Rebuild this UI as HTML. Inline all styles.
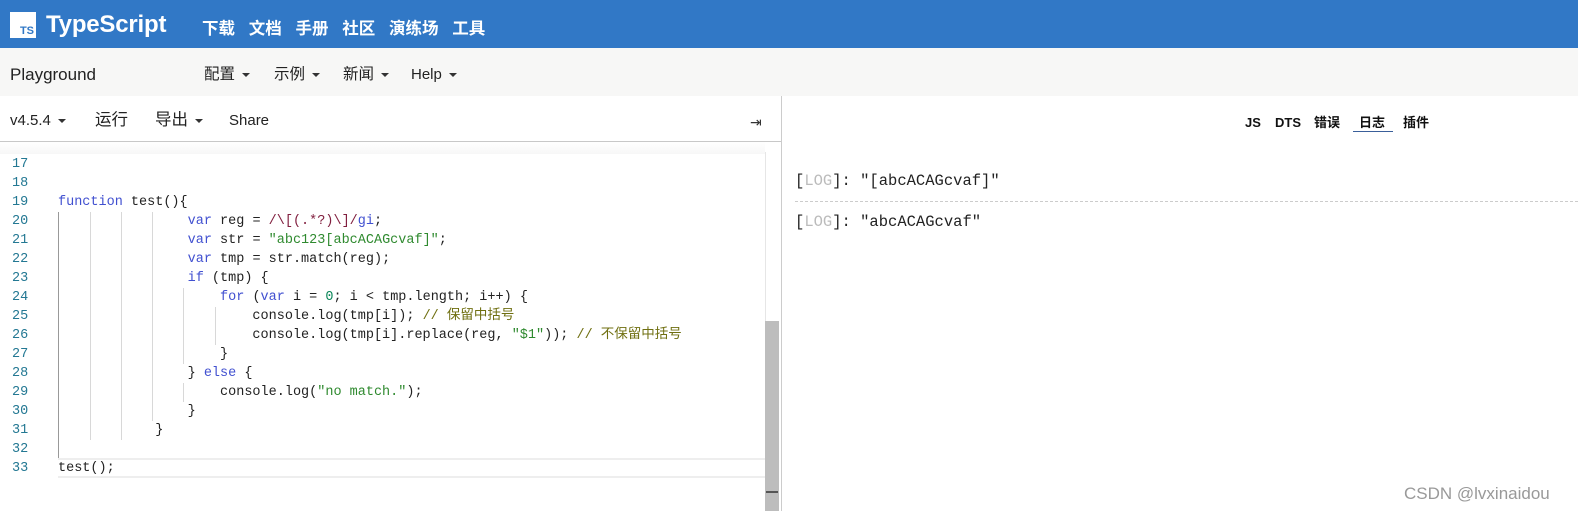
<!DOCTYPE html>
<html><head><meta charset="utf-8"><style>
*{margin:0;padding:0;box-sizing:border-box}
body{width:1578px;height:511px;overflow:hidden;background:#fff;font-family:"Liberation Sans","Noto Sans CJK SC",sans-serif;position:relative}
.abs{position:absolute;line-height:20px;white-space:nowrap}
#top{left:0;top:0;width:1578px;height:48px;background:#3178c6}
#nav{left:0;top:48px;width:1578px;height:48px;background:#f7f7f6}
.caret{display:inline-block;width:0;height:0;border-left:4px solid transparent;border-right:4px solid transparent;border-top:4px solid #333;vertical-align:middle;margin-left:7px}
.code{font-family:"Liberation Mono","Noto Sans CJK SC",monospace;font-size:13.5px;white-space:pre;line-height:19px;height:19px;color:#222}
.ln{font-family:"Liberation Mono",monospace;font-size:13.5px;color:#237893;line-height:19px;width:40px;left:12px;white-space:normal}
.k{color:#4150d0}.s{color:#2f8a2f}.r{color:#811f3f}.c{color:#6f6f10}.n{color:#098658}
.g{position:absolute;width:1px;background:#d8d8d8}
.log{font-family:"Liberation Mono",monospace;font-size:15.5px;color:#222}
.log b{font-weight:normal;color:#bbb}
</style></head><body>
<div id="top" class="abs"></div>
<div class="abs" style="left:10px;top:12px;width:26px;height:26px;background:#fff"><span style="position:absolute;right:2px;bottom:1px;font:bold 11px/11px 'Liberation Sans';color:#3178c6">TS</span></div>
<div class="abs" style="left:46px;top:10px;font-size:24px;line-height:30px;color:#fff;font-weight:bold;letter-spacing:-0.2px">TypeScript</div>
<div class="abs" style="left:202px;top:19px;font-size:16.5px;color:#fff;font-weight:bold">下载&nbsp;&nbsp;&nbsp;文档&nbsp;&nbsp;&nbsp;手册&nbsp;&nbsp;&nbsp;社区&nbsp;&nbsp;&nbsp;演练场&nbsp;&nbsp;&nbsp;工具</div>
<div id="nav" class="abs"></div>
<div class="abs" style="left:10px;top:65px;font-size:17px;color:#222">Playground</div>
<div class="abs" style="left:204px;top:65px;font-size:15.5px;color:#222">配置<span class="caret"></span></div>
<div class="abs" style="left:274px;top:65px;font-size:15.5px;color:#222">示例<span class="caret"></span></div>
<div class="abs" style="left:343px;top:65px;font-size:15.5px;color:#222">新闻<span class="caret"></span></div>
<div class="abs" style="left:411px;top:65px;font-size:15px;color:#222">Help<span class="caret"></span></div>
<div class="abs" style="left:10px;top:111px;font-size:15px;color:#222">v4.5.4<span class="caret"></span></div>
<div class="abs" style="left:95px;top:110px;font-size:16.5px;color:#222">运行</div>
<div class="abs" style="left:155px;top:110px;font-size:16.5px;color:#222">导出<span class="caret"></span></div>
<div class="abs" style="left:229px;top:111px;font-size:15px;color:#222">Share</div>
<div class="abs" style="left:750px;top:112px;font-size:14px;color:#333">⇥</div>
<div class="abs" style="left:0;top:141px;width:781px;height:1px;background:#c8c8c8"></div>
<div class="abs" style="left:781px;top:96px;width:1px;height:415px;background:#ccc"></div>
<div class="abs" style="left:0;top:142px;width:765px;height:12px;background:linear-gradient(#fff,#f7f7f7)"></div>
<div class="abs" style="left:765px;top:152px;width:1px;height:170px;background:#e6e6e6"></div>
<div class="abs" style="left:765px;top:321px;width:14px;height:190px;background:#bdbdbd"></div>
<div class="abs" style="left:766px;top:491px;width:12px;height:2px;background:#555"></div>
<!-- guides -->
<div class="g" style="left:58px;top:212px;height:247px;background:#999"></div>
<div class="g" style="left:90px;top:212px;height:228px"></div>
<div class="g" style="left:121px;top:212px;height:228px"></div>
<div class="g" style="left:152px;top:212px;height:209px"></div>
<div class="g" style="left:183px;top:288px;height:76px"></div>
<div class="g" style="left:183px;top:383px;height:19px"></div>
<div class="g" style="left:215px;top:307px;height:38px"></div>
<div class="abs" style="left:58px;top:458px;width:707px;height:20px;border-top:2px solid #eee;border-bottom:2px solid #eee"></div>
<div class="abs ln" style="top:155px">17<br>18<br>19<br>20<br>21<br>22<br>23<br>24<br>25<br>26<br>27<br>28<br>29<br>30<br>31<br>32<br>33</div>
<div class="abs" style="left:58px;top:155px;line-height:19px">
<div class="code"> </div>
<div class="code"> </div>
<div class="code"><span class="k">function</span> test(){</div>
<div class="code">                <span class="k">var</span> reg = <span class="r">/\[(.*?)\]/</span><span class="k">gi</span>;</div>
<div class="code">                <span class="k">var</span> str = <span class="s">"abc123[abcACAGcvaf]"</span>;</div>
<div class="code">                <span class="k">var</span> tmp = str.match(reg);</div>
<div class="code">                <span class="k">if</span> (tmp) {</div>
<div class="code">                    <span class="k">for</span> (<span class="k">var</span> i = <span class="n">0</span>; i &lt; tmp.length; i++) {</div>
<div class="code">                        console.log(tmp[i]); <span class="c">// 保留中括号</span></div>
<div class="code">                        console.log(tmp[i].replace(reg, <span class="s">"$1"</span>)); <span class="c">// 不保留中括号</span></div>
<div class="code">                    }</div>
<div class="code">                } <span class="k">else</span> {</div>
<div class="code">                    console.log(<span class="s">"no match."</span>);</div>
<div class="code">                }</div>
<div class="code">            }</div>
<div class="code"> </div>
<div class="code">test();</div>
</div>
<!-- right -->
<div class="abs" style="left:1245px;top:113px;font-size:13px;color:#111;font-weight:bold">JS</div>
<div class="abs" style="left:1275px;top:113px;font-size:13px;color:#111;font-weight:bold">DTS</div>
<div class="abs" style="left:1314px;top:113px;font-size:13px;color:#111;font-weight:bold">错误</div>
<div class="abs" style="left:1359px;top:113px;font-size:13px;color:#111;font-weight:bold">日志</div>
<div class="abs" style="left:1353px;top:131px;width:40px;height:1px;background:#3a5f9a"></div>
<div class="abs" style="left:1403px;top:113px;font-size:13px;color:#111;font-weight:bold">插件</div>
<div class="abs log" style="left:795px;top:171px">[<b>LOG</b>]: "[abcACAGcvaf]"</div>
<div class="abs" style="left:795px;top:201px;width:783px;border-top:1px dashed #ccc"></div>
<div class="abs log" style="left:795px;top:212px">[<b>LOG</b>]: "abcACAGcvaf"</div>
<div class="abs" style="left:1404px;top:484px;font-size:17px;color:#999">CSDN @lvxinaidou</div>
</body></html>
